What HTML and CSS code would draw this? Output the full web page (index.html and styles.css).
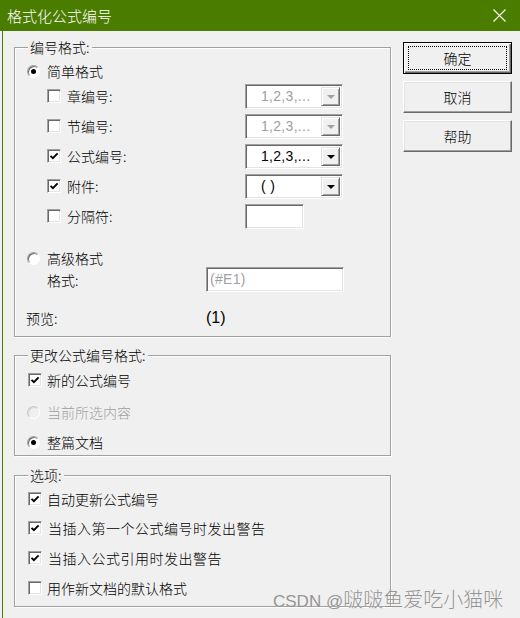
FILE: index.html
```html
<!DOCTYPE html>
<html lang="zh-CN">
<head>
<meta charset="utf-8">
<title>格式化公式编号</title>
<link rel="stylesheet" href="styles.css">
</head>
<body>
<div class="titlebar">
  <span class="title">格式化公式编号</span>
  <svg class="close" width="13" height="13" viewBox="0 0 13 13"><path d="M0.5 0.5L12.5 12.5M12.5 0.5L0.5 12.5" stroke="#fff" stroke-width="1.1" fill="none"/></svg>
</div>
<div class="win">
  <div class="groups">
    <div class="grp g1">
      <div class="legend">编号格式:</div>
      <div class="row r-main"><span class="radio on"></span><span>简单格式</span></div>
      <div class="subs">
        <div class="sub">
          <div class="opt"><span class="cb"></span><span>章编号:</span></div>
          <div class="combo dis"><span class="val">1,2,3,...</span><span class="drop"><i></i></span></div>
        </div>
        <div class="sub">
          <div class="opt"><span class="cb"></span><span>节编号:</span></div>
          <div class="combo dis"><span class="val">1,2,3,...</span><span class="drop"><i></i></span></div>
        </div>
        <div class="sub">
          <div class="opt"><span class="cb"><svg width="10" height="10" viewBox="0 0 10 10"><path d="M1.5 4.8L3.9 7.2L8.6 2.3" stroke="#000" stroke-width="1.9" fill="none"/></svg></span><span>公式编号:</span></div>
          <div class="combo"><span class="val">1,2,3,...</span><span class="drop"><i></i></span></div>
        </div>
        <div class="sub">
          <div class="opt"><span class="cb"><svg width="10" height="10" viewBox="0 0 10 10"><path d="M1.5 4.8L3.9 7.2L8.6 2.3" stroke="#000" stroke-width="1.9" fill="none"/></svg></span><span>附件:</span></div>
          <div class="combo"><span class="val">( )</span><span class="drop"><i></i></span></div>
        </div>
        <div class="sub">
          <div class="opt"><span class="cb"></span><span>分隔符:</span></div>
          <div class="field small"></div>
        </div>
      </div>
      <div class="row r-adv"><span class="radio"></span><span>高级格式</span></div>
      <div class="row r-fmt"><span class="lbl lbl-fmt">格式:</span><div class="field wide dis">(#E1)</div></div>
      <div class="row r-prev"><span class="lbl lbl-prev">预览:</span><span class="prev">(1)</span></div>
    </div>

    <div class="grp g2">
      <div class="legend">更改公式编号格式:</div>
      <div class="row r2"><span class="cb"><svg width="10" height="10" viewBox="0 0 10 10"><path d="M1.5 4.8L3.9 7.2L8.6 2.3" stroke="#000" stroke-width="1.9" fill="none"/></svg></span><span>新的公式编号</span></div>
      <div class="row r2 gap12 disabled"><span class="radio dis"></span><span>当前所选内容</span></div>
      <div class="row r2 gap10"><span class="radio on"></span><span>整篇文档</span></div>
    </div>

    <div class="grp g3">
      <div class="legend">选项:</div>
      <div class="row r2"><span class="cb"><svg width="10" height="10" viewBox="0 0 10 10"><path d="M1.5 4.8L3.9 7.2L8.6 2.3" stroke="#000" stroke-width="1.9" fill="none"/></svg></span><span>自动更新公式编号</span></div>
      <div class="row r2 gap9"><span class="cb"><svg width="10" height="10" viewBox="0 0 10 10"><path d="M1.5 4.8L3.9 7.2L8.6 2.3" stroke="#000" stroke-width="1.9" fill="none"/></svg></span><span class="wide-gap">当插入第一个公式编号时发出警告</span></div>
      <div class="row r2 gap10"><span class="cb"><svg width="10" height="10" viewBox="0 0 10 10"><path d="M1.5 4.8L3.9 7.2L8.6 2.3" stroke="#000" stroke-width="1.9" fill="none"/></svg></span><span class="wide-gap">当插入公式引用时发出警告</span></div>
      <div class="row r2 gap10"><span class="cb"></span><span>用作新文档的默认格式</span></div>
    </div>
  </div>

  <div class="buttons">
    <div class="btn default"><span class="focus">确定</span></div>
    <div class="btn">取消</div>
    <div class="btn">帮助</div>
  </div>
</div>
<div class="watermark"><span class="wm-latin">CSDN @</span><span class="wm-cjk">啵啵鱼爱吃小猫咪</span></div>
</body>
</html>
```

FILE: styles.css
```css
html, body {
  margin: 0;
  padding: 0;
  background: #f0f0f0;
  width: 520px;
  height: 618px;
  overflow: hidden;
}
body {
  position: relative;
  font-family: "Noto Sans CJK SC", "Noto Sans", sans-serif;
  font-size: 14px;
  font-weight: 300;
  color: #000;
}
.titlebar {
  height: 31px;
  background: #4a7c00;
  display: flex;
  align-items: center;
  justify-content: space-between;
  padding: 0 14px 0 7px;
}
.title {
  color: #fff;
  font-size: 15px;
  line-height: 18px;
}
.close {
  display: block;
}
.win {
  margin-left: 2px;
  border-left: 1px solid #4a7c00;
  height: 587px;
  display: flex;
  align-items: flex-start;
  padding-top: 11px;
  box-sizing: border-box;
}
.groups {
  margin-left: 11px;
  margin-top: 5px;
  width: 377px;
}
.grp {
  position: relative;
  border: 1px solid #a0a0a0;
  box-shadow: inset 1px 1px #fff, 1px 1px #fff;
}
.legend {
  position: absolute;
  top: -9px;
  left: 13px;
  padding: 0 2px;
  line-height: 16px;
  background: #f0f0f0;
}
.row {
  display: flex;
  align-items: center;
  height: 20px;
  line-height: 18px;
}
.g1 {
  padding: 13px 0 8px;
}
.r-main {
  padding-left: 12px;
}
.radio {
  position: relative;
  flex: none;
  width: 13px;
  height: 13px;
  box-sizing: border-box;
  border-radius: 50%;
  background: #fff;
  border: 1px solid;
  border-color: #a0a0a0 #fff #fff #a0a0a0;
  box-shadow: inset 1px 1px #696969;
  margin-right: 7px;
}
.radio.on::after {
  content: "";
  position: absolute;
  left: 3px;
  top: 3px;
  width: 5px;
  height: 5px;
  border-radius: 50%;
  background: #000;
}
.radio.dis {
  background: #f0f0f0;
  border-color: #c8c8c8 #fff #fff #c8c8c8;
  box-shadow: inset 1px 1px #d8d8d8;
}
.cb {
  flex: none;
  width: 14px;
  height: 14px;
  box-sizing: border-box;
  background: #fff;
  border: 1px solid;
  border-color: #a0a0a0 #fff #fff #a0a0a0;
  box-shadow: inset 1px 1px #696969, inset -1px -1px #e3e3e3;
  margin-right: 6px;
  display: flex;
  align-items: center;
  justify-content: center;
}
.cb svg {
  display: block;
}
.sub {
  display: flex;
  align-items: center;
  height: 30px;
  padding-left: 32px;
}
.opt {
  width: 198px;
  display: flex;
  align-items: center;
  line-height: 18px;
}
.combo, .field {
  box-sizing: border-box;
  height: 25px;
  background: #fff;
  border: 1px solid;
  border-color: #a0a0a0 #fff #fff #a0a0a0;
  box-shadow: inset 1px 1px #696969, inset -1px -1px #e3e3e3;
  font-family: "Liberation Sans", Arial, sans-serif;
  font-size: 14px;
  font-weight: 400;
  letter-spacing: 0.3px;
}
.combo {
  width: 98px;
  display: flex;
  align-items: center;
  padding: 2px;
}
.combo .val {
  flex: 1;
  padding-left: 13px;
  line-height: 19px;
}
.combo.dis .val {
  color: #a0a0a0;
}
.drop {
  flex: none;
  width: 19px;
  height: 19px;
  box-sizing: border-box;
  background: #f0f0f0;
  border: 1px solid;
  border-color: #e3e3e3 #696969 #696969 #e3e3e3;
  box-shadow: inset 1px 1px #fff, inset -1px -1px #a0a0a0;
  display: flex;
  align-items: center;
  justify-content: center;
}
.drop i {
  display: block;
  width: 0;
  height: 0;
  border-left: 4px solid transparent;
  border-right: 4px solid transparent;
  border-top: 4px solid #000;
  margin-top: 1px;
}
.combo.dis .drop i {
  border-top-color: #a0a0a0;
}
.field.small {
  width: 59px;
}
.field.wide {
  width: 138px;
  padding-left: 3px;
  line-height: 22px;
}
.field.dis {
  color: #a0a0a0;
}
.r-adv {
  margin-top: 18px;
  height: 18px;
  padding-left: 12px;
}
.r-fmt {
  height: 25px;
  padding-left: 32px;
}
.lbl-fmt {
  width: 159px;
}
.r-prev {
  margin-top: 16px;
  padding-left: 11px;
}
.lbl-prev {
  width: 180px;
}
.prev {
  font-family: "Liberation Sans", Arial, sans-serif;
  font-size: 16px;
  font-weight: 400;
}
.g2 {
  margin-top: 18px;
  padding: 14px 0 3px;
}
.g3 {
  margin-top: 19px;
  padding: 13px 0 8px;
}
.r2 {
  padding-left: 13px;
}
.r2 .cb {
  margin-right: 5px;
}
.r2 .radio {
  margin-left: -1px;
}
.gap12 { margin-top: 12px; }
.gap10 { margin-top: 10px; }
.gap9 { margin-top: 9px; }
.disabled {
  color: #a0a0a0;
}
.wide-gap {
  margin-left: 1px;
  letter-spacing: 0.5px;
}
.buttons {
  margin-left: 12px;
  width: 109px;
  display: flex;
  flex-direction: column;
  gap: 7px;
}
.btn {
  box-sizing: border-box;
  height: 32px;
  background: #f0f0f0;
  border: 1px solid;
  border-color: #fff #696969 #696969 #fff;
  box-shadow: inset -1px -1px #a0a0a0, inset 1px 1px #e3e3e3;
  display: flex;
  align-items: center;
  justify-content: center;
  line-height: 18px;
}
.btn.default {
  border: 1px solid #000;
  box-shadow: inset 1px 1px #fff, inset -1px -1px #696969, inset -2px -2px #a0a0a0;
  padding: 3px 4px 3px 4px;
}
.btn .focus {
  flex: 1;
  align-self: stretch;
  border: 1px dotted #000;
  display: flex;
  align-items: center;
  justify-content: center;
}
.watermark {
  position: absolute;
  left: 273px;
  top: 587px;
  color: #8a8a8a;
  text-shadow: 0 0 1px #fff;
  white-space: nowrap;
  line-height: 24px;
  opacity: 0.9;
}
.wm-latin {
  font-family: "Liberation Sans", Arial, sans-serif;
  font-size: 17px;
}
.wm-cjk {
  font-size: 20px;
}
```
